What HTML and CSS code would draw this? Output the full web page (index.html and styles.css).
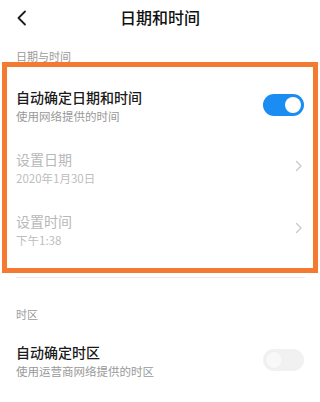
FILE: index.html
```html
<!DOCTYPE html>
<html lang="zh-CN">
<head>
<meta charset="utf-8">
<title>日期和时间</title>
<link rel="stylesheet" href="styles.css">
</head>
<body>
<div class="screen">
  <header class="topbar">
    <div class="back">
      <svg width="12" height="16" viewBox="0 0 12 16"><polyline points="9,1.5 2.5,8 9,14.5" fill="none" stroke="#1d1d1d" stroke-width="1.8" stroke-linecap="round" stroke-linejoin="round"/></svg>
    </div>
    <h1 class="title">日期和时间</h1>
    <div></div>
  </header>

  <div class="section-label first">日期与时间</div>

  <div class="row">
    <div class="texts">
      <div class="row-title">自动确定日期和时间</div>
      <div class="row-sub">使用网络提供的时间</div>
    </div>
    <div class="switch on"><span class="knob"></span></div>
  </div>

  <div class="row disabled">
    <div class="texts">
      <div class="row-title">设置日期</div>
      <div class="row-sub">2020年1月30日</div>
    </div>
    <svg class="chev" width="8" height="12" viewBox="0 0 8 12"><polyline points="1.5,1.5 6,6 1.5,10.5" fill="none" stroke="#cacaca" stroke-width="1.4" stroke-linecap="round" stroke-linejoin="round"/></svg>
  </div>

  <div class="row disabled">
    <div class="texts">
      <div class="row-title">设置时间</div>
      <div class="row-sub">下午1:38</div>
    </div>
    <svg class="chev" width="8" height="12" viewBox="0 0 8 12"><polyline points="1.5,1.5 6,6 1.5,10.5" fill="none" stroke="#cacaca" stroke-width="1.4" stroke-linecap="round" stroke-linejoin="round"/></svg>
  </div>

  <div class="divider"></div>

  <div class="section-label">时区</div>

  <div class="row">
    <div class="texts">
      <div class="row-title">自动确定时区</div>
      <div class="row-sub">使用运营商网络提供的时区</div>
    </div>
    <div class="switch off"><span class="knob"></span></div>
  </div>

  <div class="highlight"></div>
</div>
</body>
</html>
```

FILE: styles.css
```css
* { box-sizing: border-box; }
html, body {
  margin: 0;
  padding: 0;
  background: #ffffff;
}
body {
  font-family: "Noto Sans CJK SC", "Noto Sans", sans-serif;
  color: #1a1a1a;
}
.screen {
  position: relative;
  width: 320px;
  height: 402px;
  overflow: hidden;
  background: #ffffff;
}
.topbar {
  height: 34px;
  display: grid;
  grid-template-columns: 48px 1fr 48px;
  align-items: center;
}
.back {
  padding-left: 16px;
  padding-top: 1px;
  display: flex;
  align-items: center;
}
.title {
  margin: 0;
  text-align: center;
  font-size: 16px;
  font-weight: 500;
  line-height: 34px;
  color: #111111;
}
.section-label {
  padding: 0 16px;
  font-size: 11px;
  line-height: 16px;
  color: #9a9a9a;
}
.section-label.first {
  margin-top: 14px;
  margin-bottom: 10px;
}
.row {
  height: 62px;
  padding: 0 16px;
  display: flex;
  align-items: center;
  justify-content: space-between;
}
.texts {
  display: flex;
  flex-direction: column;
}
.row-title {
  font-size: 14px;
  line-height: 21px;
  font-weight: 500;
  color: #1a1a1a;
}
.row-sub {
  font-size: 11.5px;
  line-height: 16px;
  color: #999999;
}
.row.disabled .row-title {
  color: #b8b8b8;
  font-weight: 400;
}
.row.disabled .row-sub {
  color: #bdbdbd;
}
.chev {
  margin-right: 1px;
  margin-top: -2px;
}
.switch {
  width: 41px;
  height: 22px;
  border-radius: 11px;
  display: flex;
  align-items: center;
  padding: 0 3px;
}
.switch.on {
  background: #1b8cf2;
  justify-content: flex-end;
}
.switch.off {
  background: #f1f1f1;
  justify-content: flex-start;
}
.knob {
  width: 16px;
  height: 16px;
  border-radius: 50%;
  background: #ffffff;
}
.switch.off .knob {
  background: #f8f8f8;
  box-shadow: 0 0 0 1px #ececec;
}
.divider {
  margin: 17px 15px 0 16px;
  height: 1px;
  background: #ececec;
}
.section-label + .row { margin-top: 7px; }
.divider + .section-label { margin-top: 28px; }
.highlight {
  position: absolute;
  left: 2px;
  top: 62px;
  width: 316px;
  height: 211px;
  border: 5px solid #f37a30;
  pointer-events: none;
}
```
